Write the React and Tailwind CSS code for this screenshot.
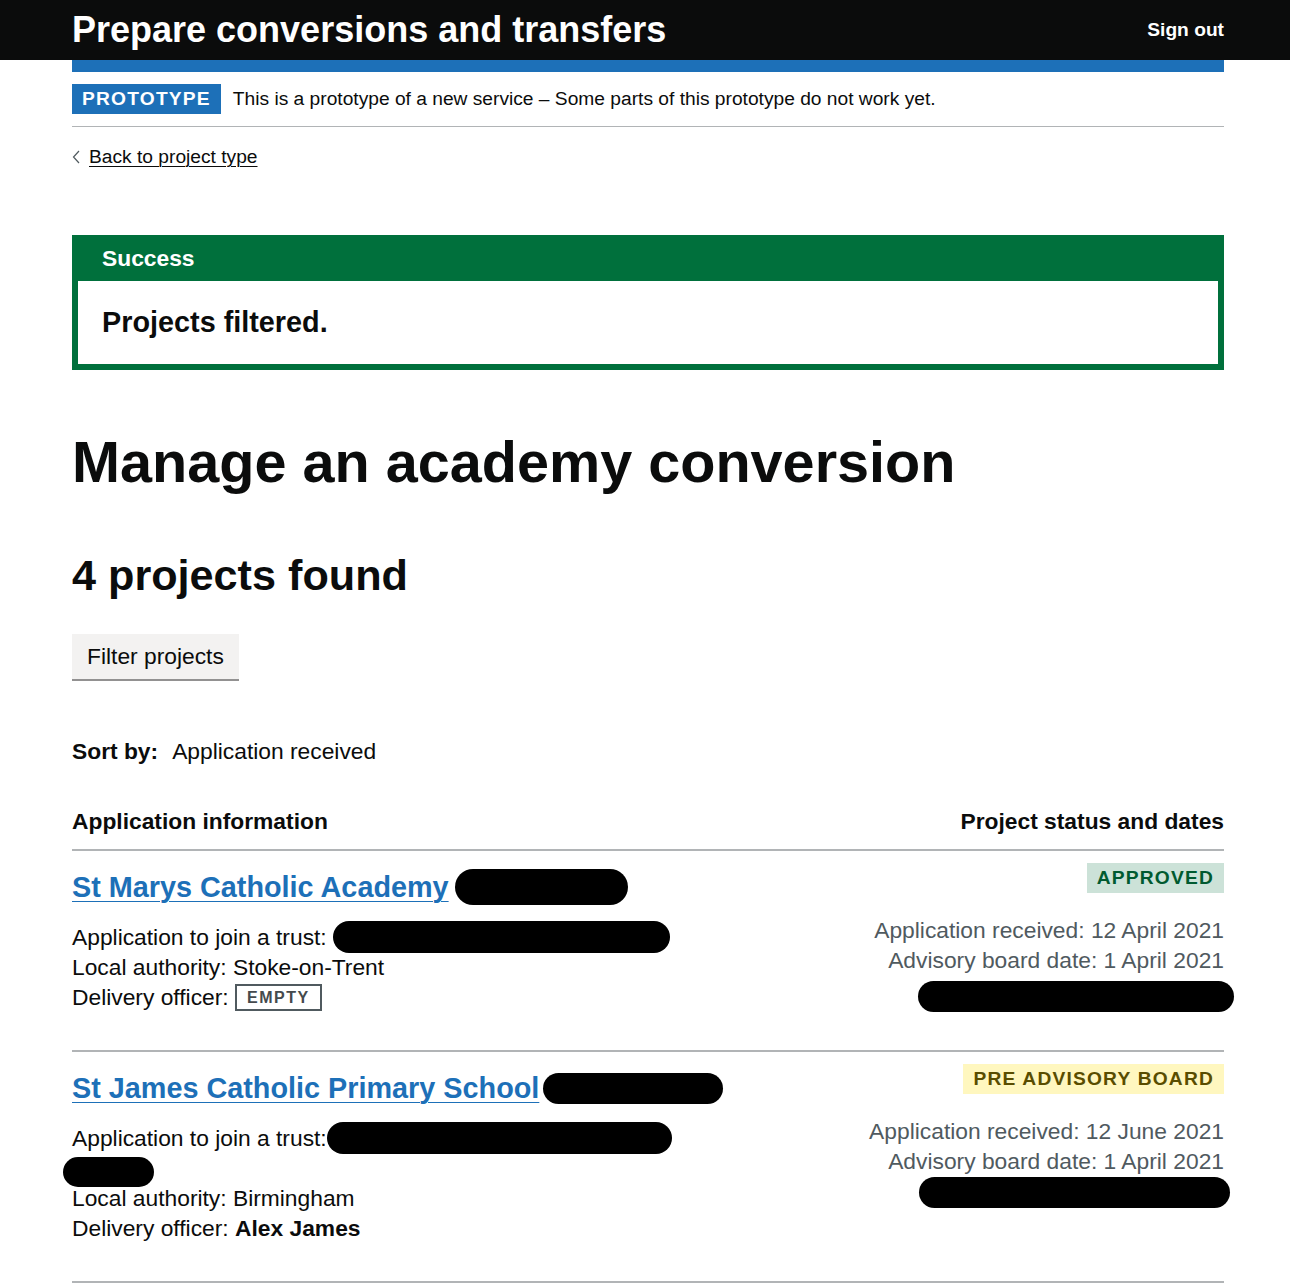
import React from 'react';

// Black redaction blobs that cover private details in the screenshot
const Redact = ({ className = '' }) => (
  <span className={`inline-block bg-black rounded-full align-middle ${className}`} />
);

const StatusTag = ({ label, tone }) => (
  <span
    className={`inline-block h-[30px] px-[10px] pt-[5px] text-[19.2px] leading-[20px] font-bold tracking-[1.2px] uppercase ${
      tone === 'green' ? 'bg-[#cce2d8] text-[#005a30]' : 'bg-[#fff7bf] text-[#594d00]'
    }`}
  >
    {label}
  </span>
);

const projects = [
  {
    name: 'St Marys Catholic Academy',
    nameBlob: 'w-[173px] h-[36px] ml-[6px]',
    trustBlob: 'w-[337px] h-[32px] ml-[6px]',
    wrapBlob: false,
    authority: 'Stoke-on-Trent',
    officer: null,
    status: 'Approved',
    tone: 'green',
    received: '12 April 2021',
    board: '1 April 2021',
    dateBlob: 'mt-[6px] w-[316px] h-[31px] -mr-[10px]',
  },
  {
    name: 'St James Catholic Primary School',
    nameBlob: 'w-[180px] h-[31px] ml-[4px]',
    trustBlob: 'w-[345px] h-[32px]',
    wrapBlob: true,
    authority: 'Birmingham',
    officer: 'Alex James',
    status: 'Pre advisory board',
    tone: 'yellow',
    received: '12 June 2021',
    board: '1 April 2021',
    dateBlob: 'mt-px w-[311px] h-[31px] -mr-[6px]',
  },
];

function ProjectRow({ p }) {
  return (
    <div className="flex justify-between items-start border-t-2 border-[#b1b4b6] pb-[38px]">
      <div className="pt-[18px]">
        <div className="flex items-center h-[36px]">
          <a
            href="#"
            className="text-[28.8px] leading-[36px] font-bold text-[#1d70b8] underline decoration-1 underline-offset-[4px]"
          >
            {p.name}
          </a>
          <Redact className={p.nameBlob} />
        </div>
        <div className="mt-[17px] text-[22.8px] leading-[30px] text-[#0b0c0c]">
          <div className="flex items-center h-[30px]">
            Application to join a trust:
            <Redact className={p.trustBlob} />
          </div>
          {p.wrapBlob && (
            <div className="h-[30px] pt-[4px]">
              <Redact className="-ml-[9px] w-[91px] h-[30px] align-top" />
            </div>
          )}
          <div>Local authority: {p.authority}</div>
          <div className="flex items-center h-[30px]">
            Delivery officer:&nbsp;
            {p.officer ? (
              <span className="font-bold">{p.officer}</span>
            ) : (
              <span className="inline-block border-2 border-[#505a5f] text-[#454a4d] px-[10px] h-[27px] leading-[23px] text-[16px] font-bold tracking-[1.5px]">
                EMPTY
              </span>
            )}
          </div>
        </div>
      </div>
      <div className="pt-[12px] flex flex-col items-end">
        <StatusTag label={p.status} tone={p.tone} />
        <div className="mt-[22px] text-[22.8px] leading-[30px] text-[#505a5f] text-right">
          <div>Application received: {p.received}</div>
          <div>Advisory board date: {p.board}</div>
        </div>
        <Redact className={p.dateBlob} />
      </div>
    </div>
  );
}

export default function App() {
  return (
    <div className="min-h-screen bg-white text-[#0b0c0c] font-['Liberation_Sans',Arial,sans-serif]">
      <header className="bg-[#0b0c0c] h-[60px]">
        <div className="ml-[72px] w-[1152px] h-full flex items-center justify-between">
          <span className="text-white font-bold text-[36px] leading-none">
            Prepare conversions and transfers
          </span>
          <a href="#" className="text-white font-bold text-[19.2px] leading-none">
            Sign out
          </a>
        </div>
      </header>

      <div className="ml-[72px] w-[1152px]">
        <div className="h-[12px] bg-[#1d70b8]" />

        <div className="flex items-center gap-[12px] pt-[12px] pb-[12px] border-b border-[#b1b4b6]">
          <span className="inline-block bg-[#1d70b8] text-white font-bold text-[19.2px] leading-[20px] tracking-[1.2px] h-[30px] pt-[5px] px-[10px]">
            PROTOTYPE
          </span>
          <span className="text-[19.2px] leading-[24px]">
            This is a prototype of a new service – Some parts of this prototype do not work yet.
          </span>
        </div>

        <a href="#" className="mt-[18px] flex items-center gap-[7px] w-max text-[19.2px] leading-[24px] text-[#0b0c0c]">
          <svg width="12" height="16" viewBox="0 0 12 16" className="-ml-[2px]">
            <path d="M9 2 L3.5 8 L9 14" fill="none" stroke="#505a5f" strokeWidth="1.2" />
          </svg>
          <span className="underline decoration-1 underline-offset-[3px]">Back to project type</span>
        </a>

        <div className="mt-[66px] border-[6px] border-[#00703c]">
          <div className="bg-[#00703c] h-[40px] pt-[3px] px-[24px]">
            <span className="text-white font-bold text-[22.8px] leading-[29px]">Success</span>
          </div>
          <div className="bg-white px-[24px] pt-[23px] pb-[24px]">
            <p className="font-bold text-[28.8px] leading-[36px]">Projects filtered.</p>
          </div>
        </div>

        <h1 className="mt-[62px] font-bold text-[57.6px] leading-[60px]">Manage an academy conversion</h1>

        <h2 className="mt-[59px] font-bold text-[43.2px] leading-[48px]">4 projects found</h2>

        <button className="mt-[35px] block h-[45px] px-[15px] bg-[#f3f2f1] shadow-[0_2px_0_#929191] text-[22.8px] leading-none text-[#0b0c0c]">
          Filter projects
        </button>

        <div className="mt-[57px] text-[22.8px] leading-[30px]">
          <span className="font-bold">Sort by:</span>
          <span className="ml-[14px]">Application received</span>
        </div>

        <div className="mt-[40px] flex justify-between text-[22.8px] leading-[30px] font-bold pb-[13px]">
          <span>Application information</span>
          <span>Project status and dates</span>
        </div>

        {projects.map((p) => (
          <ProjectRow key={p.name} p={p} />
        ))}
        <div className="border-t-2 border-[#b1b4b6]" />
      </div>
    </div>
  );
}
